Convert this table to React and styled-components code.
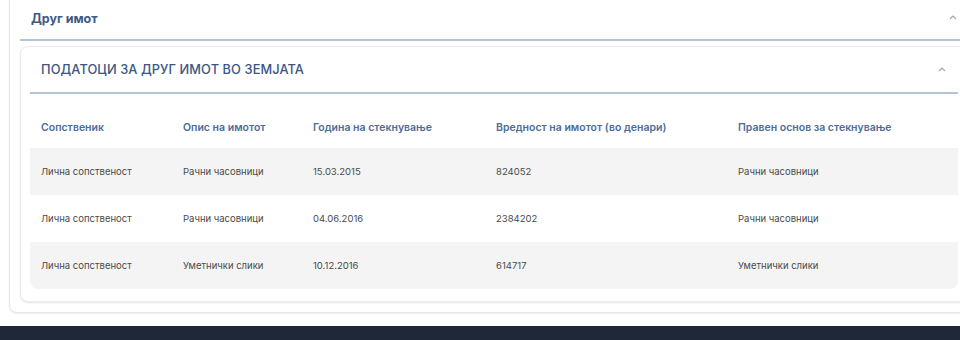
import React from "react";
import styled, { createGlobalStyle } from "styled-components";

const rows = [
  {
    owner: "Лична сопственост",
    desc: "Рачни часовници",
    year: "15.03.2015",
    value: "824052",
    basis: "Рачни часовници",
  },
  {
    owner: "Лична сопственост",
    desc: "Рачни часовници",
    year: "04.06.2016",
    value: "2384202",
    basis: "Рачни часовници",
  },
  {
    owner: "Лична сопственост",
    desc: "Уметнички слики",
    year: "10.12.2016",
    value: "614717",
    basis: "Уметнички слики",
  },
];

const columns = [
  "Сопственик",
  "Опис на имотот",
  "Година на стекнување",
  "Вредност на имотот (во денари)",
  "Правен основ за стекнување",
];

const Chevron = () => (
  <svg width="8" height="5" viewBox="0 0 8 5">
    <polyline
      points="1,4 4,1 7,4"
      fill="none"
      stroke="#a3a8ae"
      strokeWidth="1.2"
    />
  </svg>
);

const App = () => {
  return (
    <>
      <GlobalStyle />
      <Page>
        <Main>
          <OuterCard>
            <SectionHeader>
              <SectionTitle>Друг имот</SectionTitle>
              <Chevron />
            </SectionHeader>

            <InnerCard>
              <InnerHeader>
                <InnerTitle>ПОДАТОЦИ ЗА ДРУГ ИМОТ ВО ЗЕМЈАТА</InnerTitle>
                <Chevron />
              </InnerHeader>

              <Table>
                <HeadRow>
                  {columns.map((c) => (
                    <HeadCell key={c}>{c}</HeadCell>
                  ))}
                </HeadRow>
                {rows.map((r, idx) => (
                  <BodyRow key={idx} striped={idx % 2 === 0}>
                    <Cell>{r.owner}</Cell>
                    <Cell>{r.desc}</Cell>
                    <Cell>{r.year}</Cell>
                    <Cell>{r.value}</Cell>
                    <Cell>{r.basis}</Cell>
                  </BodyRow>
                ))}
              </Table>
            </InnerCard>
          </OuterCard>
        </Main>
        <Footer />
      </Page>
    </>
  );
};

export default App;

const GlobalStyle = createGlobalStyle`
  html, body {
    margin: 0;
    padding: 0;
    background: #ffffff;
    overflow: hidden;
    font-family: Inter, "Noto Sans", sans-serif;
  }
`;

const Page = styled.div`
  width: 990px;
  height: 340px;
  display: flex;
  flex-direction: column;
  background: #ffffff;
`;

const Main = styled.div`
  flex: 1;
  padding: 0 0 0 9px;
`;

const OuterCard = styled.div`
  width: 970px;
  margin-top: -8px;
  padding: 8px 10px 10px;
  box-sizing: border-box;
  background: #ffffff;
  border: 1px solid #e6e6e6;
  border-radius: 8px;
  box-shadow: 0 1px 2px rgba(0, 0, 0, 0.08);
`;

const SectionHeader = styled.div`
  height: 38px;
  display: flex;
  align-items: center;
  justify-content: space-between;
  padding: 0 11px 0 11px;
  border-bottom: 2px solid #b3c4d8;
  svg {
    margin-top: -6px;
  }
`;

const SectionTitle = styled.h2`
  margin: 0;
  font-size: 12.5px;
  font-weight: 700;
  color: #3d5985;
  margin-top: -4px;
`;

const InnerCard = styled.div`
  margin-top: 5px;
  box-sizing: border-box;
  padding: 0 9px 12px;
  background: #ffffff;
  border: 1px solid #ebebeb;
  border-radius: 8px;
  box-shadow: 0 1px 2px rgba(0, 0, 0, 0.1);
`;

const InnerHeader = styled.div`
  height: 45px;
  display: flex;
  align-items: center;
  justify-content: space-between;
  padding: 0 12px 0 11px;
  border-bottom: 2px solid #b3c4d8;
`;

const InnerTitle = styled.h3`
  margin: 0;
  font-size: 12.8px;
  font-weight: 500;
  color: #3a5682;
  letter-spacing: 0.1px;
`;

const Table = styled.div`
  margin-top: 13px;
  display: flex;
  flex-direction: column;
`;

const gridCols = "142px 130px 183px 242px 1fr";

const HeadRow = styled.div`
  display: grid;
  grid-template-columns: ${gridCols};
  height: 41px;
  align-items: center;
`;

const HeadCell = styled.div`
  padding-left: 11px;
  font-size: 10.5px;
  font-weight: 600;
  color: #4d6c97;
  white-space: nowrap;
`;

const BodyRow = styled.div`
  display: grid;
  grid-template-columns: ${gridCols};
  height: 47px;
  align-items: center;
  background: ${(props) => (props.striped ? "#f4f4f4" : "#ffffff")};

  &:last-child {
    border-radius: 0 0 8px 8px;
  }
`;

const Cell = styled.div`
  padding-left: 11px;
  font-size: 9.5px;
  color: #4a4a4a;
  white-space: nowrap;
`;

const Footer = styled.div`
  height: 14px;
  background: #1f2839;
`;
